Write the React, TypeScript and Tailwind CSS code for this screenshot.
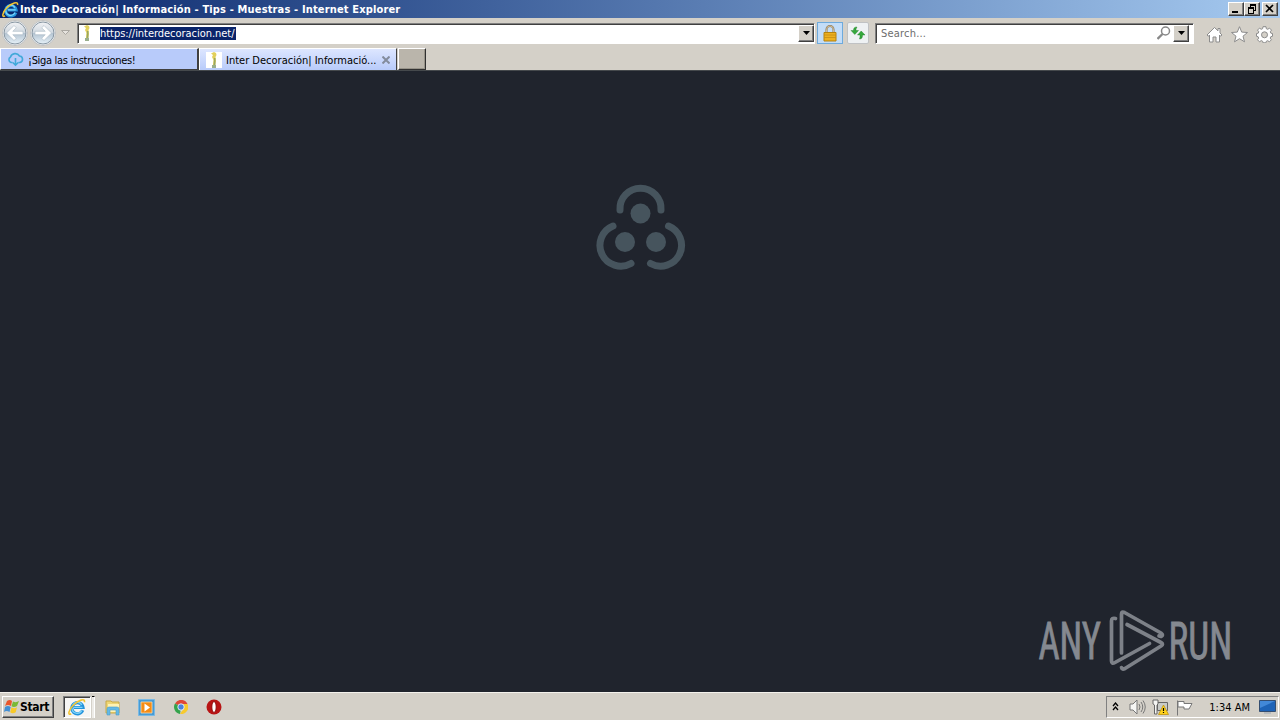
import type { ReactNode } from "react";

const BEVEL =
  "border border-t-white border-l-white border-r-[#404040] border-b-[#404040] shadow-[inset_-1px_-1px_0_#808080] bg-[#d4d0c8]";
const SUNKEN =
  "border border-t-[#808080] border-l-[#808080] border-r-white border-b-white shadow-[inset_1px_1px_0_#404040]";

function IeIcon({ size }: { size: number }) {
  return (
    <svg width={size} height={size} viewBox="0 0 18 18" fill="none" className="shrink-0">
      <path d="M14.700 12.300A5.600 5.600 0 1 1 15 9.500H6" stroke="#2493dc" strokeWidth="3.200" />
      <path d="M13.800 12.500A5.200 5.200 0 0 1 4 10.200M4.700 7.500a4.900 4.900 0 0 1 9-.5M6 9.400h8.500" stroke="#7fd4f8" strokeWidth="1.300" />
      <path d="M3.200 15.800C-.5 18 .3 12 5.200 7.200 10 2.300 17.500-.4 16.400 4.200" stroke="#f3c433" strokeWidth="1.600" />
    </svg>
  );
}

function StatueIcon() {
  return (
    <svg width="16" height="16" viewBox="0 0 16 16" className="shrink-0">
      <rect width="16" height="16" fill="#fff" />
      <path d="M5 1.500 8 0l2 1 .5 2-1 2 .5 4-1 4H7l.5-5L6 5l1-2Z" fill="#e2d05c" />
      <path d="M8 6h1.500v8H7.500Z" fill="#9aa75e" />
      <path d="M6 13h4v3H6Z" fill="#9aaf8d" />
    </svg>
  );
}

function CloudIcon() {
  return (
    <svg width="17" height="15" viewBox="0 0 17 15" fill="none" stroke="#42a9d9" strokeWidth="1.600" className="shrink-0">
      <path d="M5.500 10.500H4A3 3 0 0 1 3.500 5 5 5 0 0 1 12.500 4 3.300 3.300 0 0 1 13 10.500h-1.500M8.500 6v7M5.800 10.500l2.700 2.700 2.700-2.700" />
    </svg>
  );
}

function NavButton({ forward }: { forward?: boolean }) {
  return (
    <svg width="26" height="26" viewBox="0 0 26 26" className="shrink-0">
      <defs>
        <linearGradient id={forward ? "fwd" : "back"} x1="0" y1="0" x2="0" y2="1">
          <stop stopColor="#f2f3f5" />
          <stop offset=".48" stopColor="#d0d8e0" />
          <stop offset=".52" stopColor="#b4c4d2" />
          <stop offset="1" stopColor="#e6f1f8" />
        </linearGradient>
      </defs>
      <circle cx="13" cy="13" r="12.500" fill="#f4f5f6" stroke="#bfc1c2" />
      <circle cx="13" cy="13" r="11" fill={forward ? "url(#fwd)" : "url(#back)"} stroke="#8796a2" />
      <path
        d="M4.500 13 12 5.500l2.300 2.300-3.500 3.500H21v3.400H10.800l3.500 3.500L12 20.500Z"
        fill="#fff"
        stroke="#a9b8c4"
        strokeWidth=".6"
        transform={forward ? "translate(26 0) scale(-1 1)" : undefined}
      />
    </svg>
  );
}

function DropButton() {
  return (
    <div className={`flex h-[17px] w-4 shrink-0 items-center justify-center ${BEVEL}`}>
      <svg width="7" height="4" viewBox="0 0 7 4"><path d="M0 0h7L3.500 4Z" fill="#000" /></svg>
    </div>
  );
}

function WindowButton({ children }: { children: ReactNode }) {
  return (
    <div className={`h-[14px] w-4 ${BEVEL}`}>
      <svg width="14" height="12" viewBox="0 0 14 12" fill="none" stroke="#000" shapeRendering="crispEdges">{children}</svg>
    </div>
  );
}

function TitleBar() {
  return (
    <header className="flex h-[18px] shrink-0 items-center bg-linear-to-r from-[#0a246a] to-[#a6caf0] pl-[2px] pr-[2px] text-white">
      <IeIcon size={17} />
      <span className="ml-px w-[384px] whitespace-nowrap pt-px text-[11px] font-bold leading-[18px] tracking-[0.15px]">
        Inter Decoración| Información - Tips - Muestras - Internet Explorer
      </span>
      <div className="ml-auto flex">
        <WindowButton><path d="M3 9h6" strokeWidth="2" /></WindowButton>
        <WindowButton>
          <path d="M5 2h6M3 5h6" strokeWidth="2" />
          <path d="M5.500 2v2M10.500 2v5.500H9M3.500 5v5.500h5V5" />
        </WindowButton>
        <div className="w-[2px]" />
        <WindowButton><path d="m3 2 7 7M10 2 3 9" strokeWidth="1.700" shapeRendering="auto" /></WindowButton>
      </div>
    </header>
  );
}

function AddressRow() {
  return (
    <div className="flex h-[30px] shrink-0 items-center pl-[2px] text-[11px]">
      <NavButton />
      <div className="w-[2px]" />
      <NavButton forward />
      <svg width="9" height="6" viewBox="0 0 9 6" className="ml-[5px]"><path d="M.5.500h8l-4 4Z" fill="#e6e3de" stroke="#aaa7a1" /></svg>
      <div className={`ml-[7px] flex h-[21px] w-[738px] items-center bg-white pl-px ${SUNKEN}`}>
        <StatueIcon />
        <span className="ml-[5px] h-[13px] w-[136px] whitespace-nowrap bg-[#0a246a] leading-[14px] tracking-[-0.04px] text-white">
          https://interdecoracion.net/
        </span>
        <div className="ml-auto"><DropButton /></div>
      </div>
      <div className="ml-[2px] flex h-[22px] w-[26px] items-center justify-center border border-[#6daadd] bg-[#c3ddf8]">
        <svg width="14" height="17" viewBox="0 0 14 17">
          <path d="M3.500 8V4.500a3.500 3.500 0 0 1 7 0V8" fill="none" stroke="#8e7959" strokeWidth="2" />
          <path d="M3.500 8V4.500a3.500 3.500 0 0 1 7 0V8" fill="none" stroke="#ddcba3" strokeWidth=".8" />
          <path d="M1 7.500h12v8.500H1Z" fill="#edb01f" stroke="#b5820f" />
          <path d="M1 10h12M1 12.500h12" stroke="#c78e13" strokeWidth=".8" />
        </svg>
      </div>
      <div className="ml-[4px] flex h-[22px] w-[22px] items-center justify-center rounded-[2px] border border-[#c0c2c4] bg-[#eef1f3]">
        <svg width="16" height="16" viewBox="0 0 16 16" fill="#35a83c" stroke="#167822" strokeWidth=".4">
          <path d="M7 2C4.500 2 3.500 3 3.500 5.500H1l3.800 4 3.700-4H6V4Z" />
          <path d="M9.500 14c2.500 0 3-1.500 3-4H15l-3.800-4L7.500 10H10v2Z" />
        </svg>
      </div>
      <div className={`ml-[6px] flex h-[21px] w-[319px] items-center bg-white pl-[5px] pr-[4px] text-[#6d6d6d] ${SUNKEN}`}>
        <span className="pt-[2px] tracking-[0.2px]">Search...</span>
        <svg width="14" height="14" viewBox="0 0 14 14" fill="none" stroke="#888" className="ml-auto mr-[2px]">
          <circle cx="8.500" cy="5" r="4" strokeWidth="1.500" />
          <path d="m5.500 8-5 5" strokeWidth="2.300" />
        </svg>
        <DropButton />
      </div>
      <div className="ml-[12px] mt-[3px] flex gap-[8px]">
        <svg width="17" height="17" viewBox="0 0 17 17" fill="#fff" stroke="#8c8c8c" strokeLinejoin="round">
          <path d="M8.500 1.500 1 9l1.500 1.200L3.500 9v7H7v-5h3v5h3.500V9l1 1.200L16 9l-2-2V2.500h-2v2.300Z" />
        </svg>
        <svg width="17" height="17" viewBox="0 0 17 17" fill="#fff" stroke="#8c8c8c" strokeLinejoin="round">
          <path d="m8.500.700 2.200 5.400 5.800.4-4.500 3.700 1.500 5.600-5-3.100-5 3.100L5 10.200.5 6.500l5.800-.4Z" />
        </svg>
        <svg width="17" height="17" viewBox="0 0 17 17" fill="#fff" stroke="#8c8c8c" strokeLinejoin="round">
          <path d="M7 .7h3l.3 2 1.500.6 1.700-1.200 2 2-1.200 1.700.6 1.400 1.600.3v2.800l-1.700.4-.6 1.400 1.200 1.700-2 2-1.700-1.100-1.400.6-.4 1.500H7l-.4-1.600-1.400-.6-1.700 1.200-2-2 1.200-1.700-.6-1.400-1.600-.4V7.500l1.700-.3.6-1.400-1.300-1.700 2-2 1.700 1.200 1.400-.6Z" />
          <circle cx="8.500" cy="8.800" r="3" fill="#d4d0c8" />
        </svg>
      </div>
    </div>
  );
}

function Tabs() {
  return (
    <div className="flex h-[23px] shrink-0 border-b border-[#45494c] text-[11px] leading-[22px] text-black">
      <div className="flex h-[22px] w-[199px] items-center border-l border-t border-l-white border-t-white border-r-2 border-r-[#404040] border-b border-b-[#404040] bg-[#b8cbfa] pl-[6px]">
        <CloudIcon />
        <span className="ml-[4px] whitespace-nowrap pt-[3px] tracking-[-0.32px]">¡Siga las instrucciones!</span>
      </div>
      <div className="flex h-[22px] w-[198px] items-center border-l border-t border-white border-r border-r-[#404040] bg-linear-to-b from-[#dde6ff] to-[#b8cbfa] pl-[6px]">
        <StatueIcon />
        <span className="ml-1 w-[152px] whitespace-nowrap pt-[2px]">Inter Decoración| Informació...</span>
        <svg width="8" height="8" viewBox="0 0 8 8" className="ml-[4px]"><path d="m.5.500 7 7M7.500.500l-7 7" stroke="#838c9d" strokeWidth="2" /></svg>
      </div>
      <div className="ml-px h-[22px] w-[28px] border border-l-white border-t-white border-r-[#303030] border-b-[#303030] bg-[#bab5ab] shadow-[inset_-1px_-1px_0_#979389]" />
    </div>
  );
}

function BiohazardMark() {
  return (
    <svg width="92" height="90" viewBox="594 182 92 90" fill="none" stroke="#46545d" strokeWidth="7" strokeLinecap="round">
      <path d="M620 210A20.540 20.540 0 1 1 661 210" />
      <path d="M613 226A20.840 20.840 0 1 0 631 263.500" />
      <path d="M668.500 226A20.840 20.840 0 1 1 650.500 263.500" />
      <g fill="#46545d" stroke="none">
        <circle cx="640.500" cy="213.500" r="10" />
        <circle cx="625" cy="242" r="10" />
        <circle cx="656" cy="242" r="10" />
      </g>
    </svg>
  );
}

function AnyRunLogo() {
  return (
    <svg width="200" height="70" viewBox="1035 605 200 70">
      <g fill="#858990" stroke="#858990" strokeWidth=".8" fontFamily="Roboto, sans-serif" fontSize="51">
        <text transform="translate(1038.500 659) scale(.59 1)" textLength="106" lengthAdjust="spacingAndGlyphs">ANY</text>
        <text transform="translate(1168.500 659) scale(.59 1)" textLength="108" lengthAdjust="spacingAndGlyphs">RUN</text>
      </g>
      <g fill="none" stroke="#7d8188" strokeWidth="3.700" strokeLinejoin="round" strokeLinecap="round">
        <path d="M1121.500 653v-39q0-3 3-1.500l36.500 20.500q3 2 0 3.500l-2-.5" />
        <path d="M1115.500 618.500q-4-1-4 2.500v40q0 3.500 3.500 1.500l34.500-19" />
        <path d="M1127 624.500l34 18q3 1.500 0 3.500l-36 22.500q-3 1.500-3.500-1" />
      </g>
    </svg>
  );
}

function WindowsFlag() {
  return (
    <svg width="16" height="16" viewBox="0 0 16 16" className="shrink-0">
      <path d="M3 2q3-2 5 0L7 7Q4 5 1 7Z" fill="#e9562c" />
      <path d="M9 2.500q3 1.500 6-.5l-2 5q-3 2-5.500.300Z" fill="#79b936" />
      <path d="M1 8q3-2 5.700 0l-1.200 5q-3-2-5.500 0Z" fill="#438fd4" />
      <path d="M7.500 8.300q3 2 5.500 0l-1.300 5q-3 2-5.500 0Z" fill="#f8c928" />
    </svg>
  );
}

function Taskbar() {
  return (
    <footer className="flex h-7 shrink-0 items-center border-t border-[#f3f1ec] bg-[#d4d0c8] pl-[2px] pr-px text-[11px] text-black">
      <div className={`mt-px flex h-[22px] w-[52px] items-center pl-px ${BEVEL}`}>
        <WindowsFlag />
        <span className="text-[12px] font-bold tracking-[-0.35px]">Start</span>
      </div>
      <div className="ml-[9px] mt-px flex">
        <div className={`flex h-[22px] w-[28px] items-center justify-center bg-[#f6f5f3] ${SUNKEN}`}><IeIcon size={18} /></div>
        <div className="ml-px h-[22px] w-[3px] border-r border-t border-r-white border-t-black bg-[#edebe7]" />
      </div>
      <svg width="16" height="17" viewBox="0 0 16 17" className="ml-[10px] mt-px">
        <path d="M1 2h5l1 1h7v11H1Z" fill="#efd675" stroke="#c8a846" />
        <path d="M3 5h11v8H3Z" fill="#fff2b3" />
        <path d="M2 16v-6q0-2 2-2h8q2 0 2 2v6h-3v-5H5v5Z" fill="#64b9e5" stroke="#4a9aca" strokeWidth=".6" />
      </svg>
      <svg width="17" height="17" viewBox="0 0 17 17" className="ml-[17px] mt-px">
        <path d="M.5.500h16v16H.5Z" fill="#479bd5" stroke="#79b9e4" />
        <path d="M3 3h11v11H3Z" fill="#f68c14" stroke="#fbd9a8" strokeWidth=".8" />
        <path d="m6.500 4.500 5.500 4-5.500 4Z" fill="#fff" />
      </svg>
      <svg width="14" height="14" viewBox="0 0 14 14" className="ml-[19px] mt-px">
        <path d="M7 7 1 3.500A7 7 0 0 1 13.500 4H7Z" fill="#df4737" />
        <path d="M1 3.500 7 7l-1 7A7 7 0 0 1 1 3.500" fill="#35a34c" />
        <path d="M13.500 4A7 7 0 0 1 6 14l4-6-3-4Z" fill="#f7ca2e" />
        <circle cx="7" cy="7" r="3.200" fill="#4a83dd" stroke="#fff" strokeWidth=".8" />
      </svg>
      <svg width="16" height="16" viewBox="0 0 16 16" className="ml-[18px] mt-px">
        <circle cx="8" cy="8" r="7.500" fill="#b81414" />
        <ellipse cx="8" cy="8" rx="2.200" ry="5.500" fill="#fff" stroke="#8f0808" />
      </svg>
      <div className="ml-auto mt-px flex h-[22px] w-[173px] items-center border border-t-[#808080] border-l-[#808080] border-r-white border-b-white pl-[5px] pr-[2px]">
        <svg width="7" height="9" viewBox="0 0 7 9" fill="none" stroke="#000" strokeWidth="1.300" className="mb-[2px]"><path d="m1 4 2.500-3L6 4M1 8l2.500-3L6 8" /></svg>
        <svg width="17" height="16" viewBox="0 0 17 16" fill="#f6f6f4" stroke="#777" strokeWidth="1" className="ml-[10px]">
          <path d="M1 5h3l4-4v14l-4-4H1Z" />
          <path d="M10 5q2 3 0 6M12 3q3.500 5 0 10M14 1.500q4.500 6.500 0 13" fill="none" />
        </svg>
        <svg width="17" height="17" viewBox="0 0 17 17" className="ml-[6px]">
          <path d="M5.500 3.500h10v8h-10Z" fill="#c9cbc8" stroke="#666" />
          <path d="M1 1h5v4l-1 1v9H2.500V6L1 5Z" fill="#f5f5f3" stroke="#666" />
          <path d="m11.500 6 5 9.500h-10Z" fill="#ffd21b" stroke="#b98b00" strokeWidth=".7" />
          <path d="M11.500 9v3M11.500 13v1" stroke="#000" strokeWidth="1.200" />
        </svg>
        <svg width="17" height="17" viewBox="0 0 17 17" fill="#fff" stroke="#777" className="ml-[7px]">
          <path d="M1.500 1.500v15M2 2.500h6v2h8L13 10H8V8H2Z" />
        </svg>
        <span className="ml-auto mr-[9px] whitespace-nowrap pt-[2px]">1:34 AM</span>
        <svg width="17" height="14" viewBox="0 0 17 14">
          <path d="M.5.500h16v11H.5Z" fill="#1e63b7" stroke="#354e70" />
          <path d="M1 1h15L1 8Z" fill="#4288d8" />
          <path d="M5 13h7" stroke="#9aa5b3" />
        </svg>
      </div>
    </footer>
  );
}

export default function App() {
  return (
    <div className="flex h-[720px] w-[1280px] flex-col overflow-hidden bg-[#d4d0c8] [font-family:'DejaVu_Sans_Condensed','DejaVu_Sans',sans-serif] [font-stretch:condensed]">
      <TitleBar />
      <AddressRow />
      <Tabs />
      <main className="flex min-h-0 flex-1 flex-col bg-[#20242d]">
        <div className="flex justify-center pt-[111px]"><BiohazardMark /></div>
        <div className="mb-[17px] ml-auto mr-[45px] mt-auto"><AnyRunLogo /></div>
      </main>
      <Taskbar />
    </div>
  );
}
